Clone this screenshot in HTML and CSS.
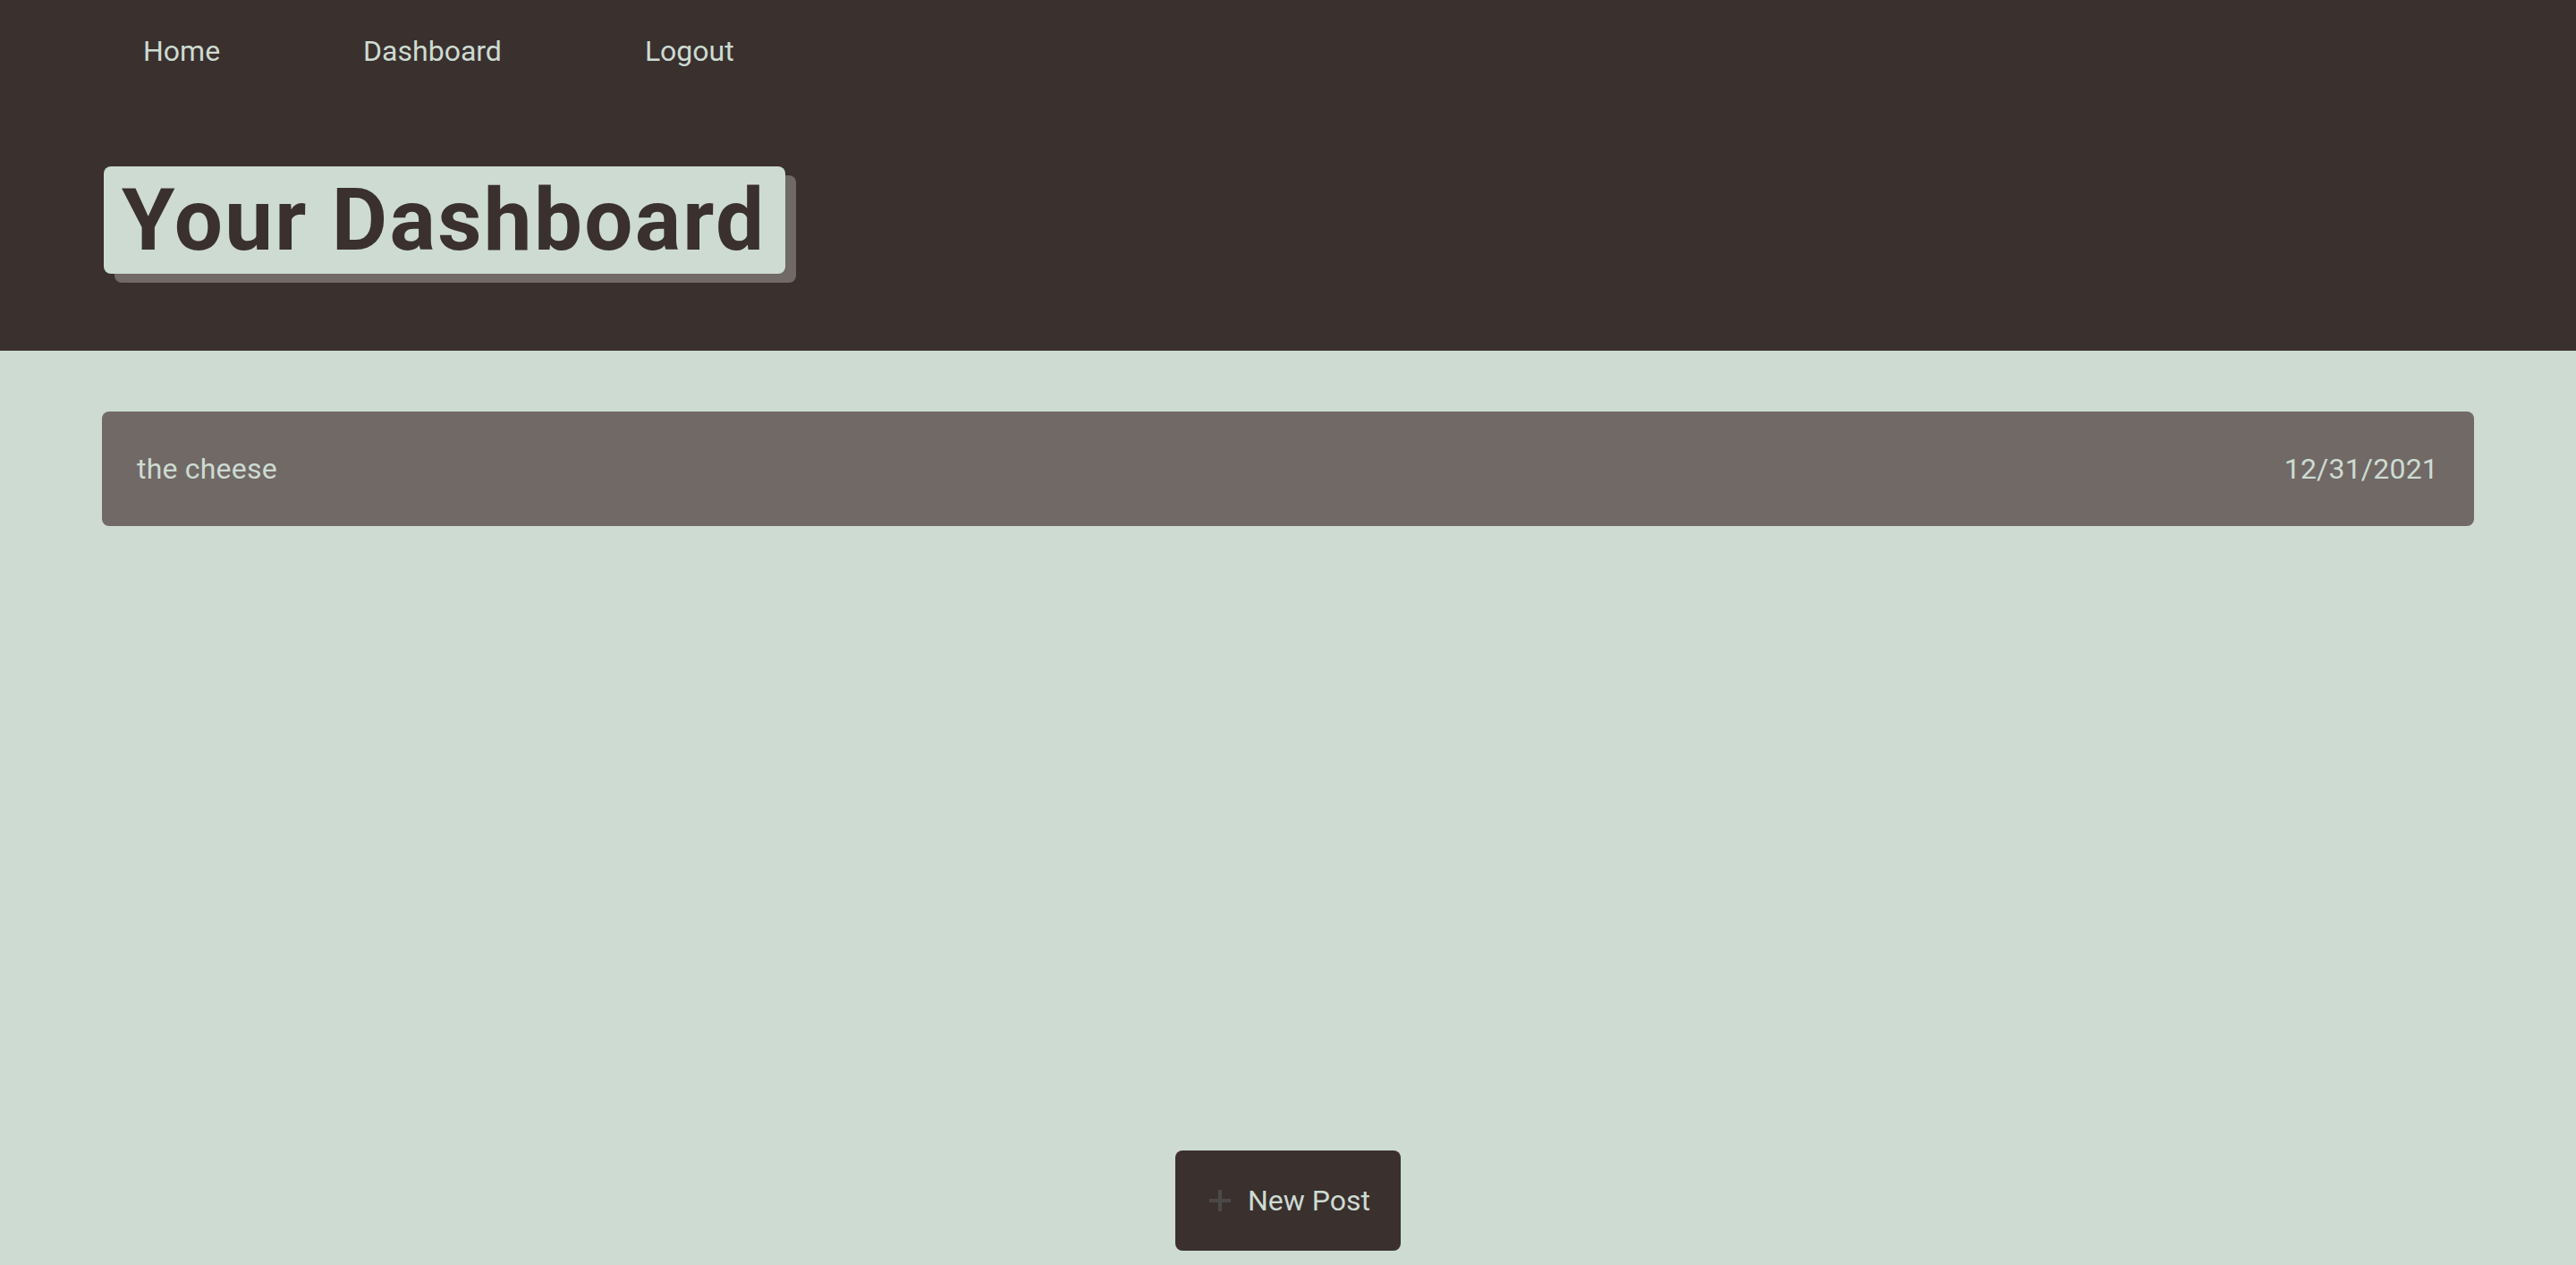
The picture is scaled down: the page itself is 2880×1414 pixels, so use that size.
FILE: index.html
```html
<!DOCTYPE html>
<html lang="en">
<head>
<meta charset="utf-8">
<title>Dashboard</title>
<link rel="stylesheet" href="styles.css">
</head>
<body>
  <header class="site-header">
    <nav class="nav">
      <a class="nav-link" href="#">Home</a>
      <a class="nav-link" href="#">Dashboard</a>
      <a class="nav-link" href="#">Logout</a>
    </nav>
    <h1 class="page-title">Your Dashboard</h1>
  </header>
  <main class="content">
    <a class="post-card" href="#">
      <span class="post-title">the cheese</span>
      <span class="post-date">12/31/2021</span>
    </a>
    <button class="new-post" type="button">
      <svg class="plus-icon" viewBox="0 0 24 24" width="24" height="24" aria-hidden="true">
        <path d="M10 0h4v10h10v4H14v10h-4V14H0v-4h10z"/>
      </svg>
      <span>New Post</span>
    </button>
  </main>
</body>
</html>
```

FILE: styles.css
```css
* { box-sizing: border-box; }

html, body {
  margin: 0;
  padding: 0;
}

body {
  min-height: 100vh;
  display: flex;
  flex-direction: column;
  background: #cddbd2;
  font-family: Roboto, "Open Sans", sans-serif;
  color: #cddbd2;
}

.site-header {
  background: #3a302e;
  padding: 33px 0 86px;
}

.nav {
  display: flex;
  padding-left: 80px;
}

.nav-link {
  color: #cddbd2;
  text-decoration: none;
  font-size: 32px;
  line-height: 48px;
  padding: 0 80px;
}

.page-title {
  display: inline-block;
  margin: 105px 0 0 116px;
  padding: 0 22px 0 20px;
  background: #cddbd2;
  color: #3a302e;
  border-radius: 8px;
  box-shadow: 12px 10px 0 #716966;
  font-family: Roboto, sans-serif;
  font-weight: 700;
  font-size: 96px;
  line-height: 120px;
  letter-spacing: 2.3px;
}

.content {
  flex: 1;
  display: flex;
  flex-direction: column;
  align-items: center;
  padding: 68px 114px 16px;
}

.post-card {
  align-self: stretch;
  display: flex;
  justify-content: space-between;
  align-items: center;
  background: #716966;
  color: #cddbd2;
  text-decoration: none;
  border-radius: 8px;
  padding: 41px 40px 40px 39px;
  font-size: 32px;
  line-height: 47px;
  letter-spacing: 0.2px;
}

.new-post {
  margin-top: auto;
  display: flex;
  align-items: center;
  gap: 19px;
  background: #3a302e;
  color: #cddbd2;
  border: 0;
  border-radius: 8px;
  padding: 0 34px 0 38px;
  height: 112px;
  font-family: Roboto, "Open Sans", sans-serif;
  font-size: 32px;
}

.plus-icon {
  fill: #4b4948;
  flex: none;
}
```
